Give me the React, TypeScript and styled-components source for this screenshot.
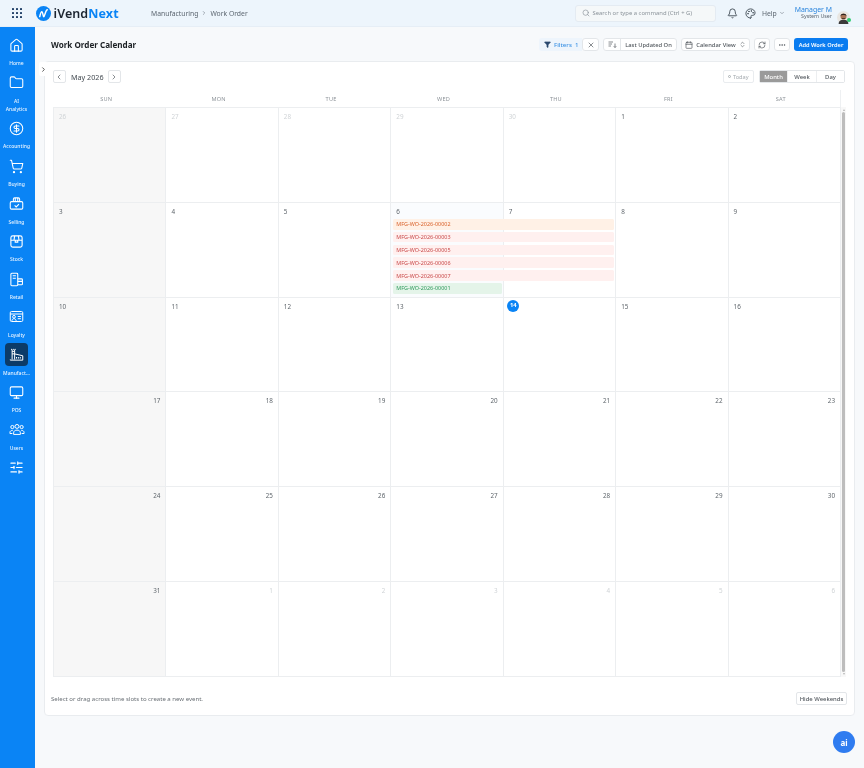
import React from "react";
import styled, { createGlobalStyle } from "styled-components";
import {
  Home,
  Folder,
  CircleDollarSign,
  ShoppingCart,
  Monitor,
  SlidersHorizontal,
  Search,
  Bell,
  Palette,
  ChevronDown,
  ChevronLeft,
  ChevronRight,
  ChevronsUpDown,
  X,
  Calendar,
  RefreshCw,
  Ellipsis,
  Filter,
} from "lucide-react";

const GlobalStyle = createGlobalStyle`
  html, body {
    margin: 0;
    padding: 0;
    height: 100%;
    overflow: hidden;
    background: #f7f9fb;
    font-family: "Noto Sans", "Liberation Sans", sans-serif;
    color: #383838;
  }
  * { box-sizing: border-box; }
`;

const Page = styled.div`
  width: 864px;
  height: 768px;
  display: flex;
  flex-direction: column;
  position: relative;
  will-change: transform;
`;

const TopBar = styled.header`
  height: 27px;
  flex: none;
  display: flex;
  align-items: center;
  background: #edf5fc;
  border-bottom: 1px solid #e6eef6;
  padding-left: 12px;
`;

const AppsGrid = styled.div`
  width: 10px;
  height: 10px;
  display: grid;
  grid-template-columns: repeat(3, 2.4px);
  grid-auto-rows: 2.4px;
  justify-content: space-between;
  align-content: space-between;
  span {
    background: #16365f;
    border-radius: 0.4px;
  }
`;

const Brand = styled.div`
  display: flex;
  align-items: center;
  gap: 2.5px;
  margin-left: 14px;
  width: 115px;
`;

const BrandName = styled.span`
  font-size: 12.5px;
  font-weight: 600;
  color: #1c2530;
  letter-spacing: 0.1px;
  b {
    font-weight: 700;
    color: #0a84f5;
  }
`;

const Crumbs = styled.nav`
  display: flex;
  align-items: center;
  gap: 3px;
  font-size: 6.8px;
  color: #5c6670;
`;

const TopRight = styled.div`
  margin-left: auto;
  display: flex;
  align-items: center;
  padding-right: 14px;
`;

const SearchBox = styled.div`
  width: 141px;
  height: 17px;
  display: flex;
  align-items: center;
  gap: 2px;
  padding-left: 6px;
  background: #f5f8f9;
  border: 1px solid #e4ebf2;
  border-radius: 3px;
  font-size: 5.9px;
  color: #8c949b;
  margin-right: 7px;
`;

const IconSlot = styled.div`
  width: 18px;
  display: flex;
  justify-content: center;
  color: #404a54;
`;

const Help = styled.div`
  display: flex;
  align-items: center;
  gap: 2px;
  font-size: 6.8px;
  color: #5c6670;
  margin: 0 10px 0 2.5px;
`;

const UserBlock = styled.div`
  display: flex;
  flex-direction: column;
  align-items: flex-end;
  line-height: 7.5px;
  margin-right: 5px;
`;

const UserName = styled.span`
  font-size: 6.9px;
  color: #2d86dd;
`;

const UserRole = styled.span`
  font-size: 5.3px;
  color: #5c6670;
`;

const Avatar = styled.div`
  position: relative;
  width: 13px;
  height: 13px;
  &::after {
    content: "";
    position: absolute;
    right: -1px;
    bottom: -2px;
    width: 4px;
    height: 4px;
    border-radius: 50%;
    background: #2ecc71;
  }
`;

const Body = styled.div`
  flex: 1;
  display: flex;
  min-height: 0;
`;

const Sidebar = styled.aside`
  width: 35px;
  flex: none;
  background: #0a84f5;
  padding: 10px 2px 0 0;
  display: flex;
  flex-direction: column;
  align-items: center;
  gap: 7.7px;
`;

const NavItem = styled.div`
  width: 33px;
  display: flex;
  flex-direction: column;
  align-items: center;
`;

const NavIcon = styled.div<{ $active?: boolean }>`
  width: 23px;
  height: 23px;
  margin: -3.5px 0;
  display: flex;
  align-items: center;
  justify-content: center;
  border-radius: 4px;
  color: #fff;
  background: ${(p) => (p.$active ? "#0c3b68" : "transparent")};
`;

const NavLabel = styled.span`
  margin-top: 6px;
  font-size: 5px;
  line-height: 8px;
  color: #e8f3ff;
  font-weight: 500;
  text-align: center;
  white-space: nowrap;
`;

const Main = styled.main`
  flex: 1;
  min-width: 0;
  display: flex;
  flex-direction: column;
  padding-top: 11px;
`;

const TitleRow = styled.div`
  display: flex;
  align-items: center;
  height: 13px;
  padding: 0 16px;
  margin-bottom: 10px;
`;

const Title = styled.h1`
  margin: 0 auto 0 0;
  font-size: 8.1px;
  font-weight: 700;
  color: #1c2024;
`;

const ActionGroup = styled.div`
  display: flex;
  align-items: center;
  gap: 4px;
`;

const FilterPill = styled.div`
  width: 43px;
  height: 13px;
  display: flex;
  align-items: center;
  gap: 3px;
  padding-left: 5px;
  background: #eef5fc;
  border-radius: 3px 0 0 3px;
  font-size: 6.1px;
  font-weight: 500;
  color: #3d93e5;
  white-space: nowrap;
  margin-right: -4px;
`;

const ToolButton = styled.button<{ $w: number }>`
  width: ${(p) => p.$w}px;
  height: 13px;
  padding: 0;
  display: flex;
  align-items: center;
  justify-content: center;
  gap: 3px;
  background: #fff;
  border: 1px solid #e3e6e9;
  border-radius: 3px;
  font: inherit;
  font-size: 5.8px;
  font-weight: 500;
  color: #50565c;
  white-space: nowrap;
`;

const SortGroup = styled.div`
  display: flex;
  width: 74px;
  height: 13px;
  background: #fff;
  border: 1px solid #e3e6e9;
  border-radius: 3px;
  font-size: 5.8px;
  font-weight: 500;
  color: #50565c;
  white-space: nowrap;
`;

const SortIcon = styled.div`
  width: 17px;
  flex: none;
  display: flex;
  align-items: center;
  justify-content: center;
  border-right: 1px solid #e3e6e9;
`;

const SortLabel = styled.div`
  flex: 1;
  display: flex;
  align-items: center;
  justify-content: center;
`;

const PrimaryButton = styled.button`
  width: 54px;
  height: 13px;
  padding: 0;
  border: 0;
  border-radius: 3px;
  background: #0a7cf0;
  color: #fff;
  font: inherit;
  font-size: 5.7px;
  font-weight: 600;
  white-space: nowrap;
`;

const Card = styled.section`
  position: relative;
  height: 655px;
  margin: 0 9px;
  padding: 8px 8px 10px;
  background: #fff;
  border: 1px solid #e9ecef;
  border-radius: 4px;
  display: flex;
  flex-direction: column;
`;

const CollapseTab = styled.div`
  position: absolute;
  left: -6px;
  top: 0;
  width: 9px;
  height: 14px;
  display: flex;
  align-items: center;
  justify-content: center;
  background: #fff;
  border-radius: 2px;
  color: #444;
`;

const CalToolbar = styled.div`
  display: flex;
  align-items: center;
  height: 13px;
  padding-right: 1px;
`;

const NavSquare = styled.button`
  width: 12.5px;
  height: 13px;
  padding: 0;
  display: flex;
  align-items: center;
  justify-content: center;
  background: #fff;
  border: 1px solid #e3e6e9;
  border-radius: 2px;
  color: #50565c;
`;

const MonthLabel = styled.span`
  margin: 0 4.5px 0 5.5px;
  font-size: 7.2px;
  color: #444b52;
`;

const TodayButton = styled.div`
  margin-left: auto;
  width: 31px;
  height: 13px;
  display: flex;
  align-items: center;
  justify-content: center;
  gap: 1.5px;
  border: 1px solid #e9ecef;
  border-radius: 2px;
  font-size: 5.6px;
  color: #a5abb0;
`;

const TodayDot = styled.span`
  width: 3px;
  height: 3px;
  border: 0.7px solid #aab0b5;
  border-radius: 50%;
`;

const Segments = styled.div`
  display: flex;
  margin-left: 5px;
  height: 13px;
  border: 1px solid #e3e6e9;
  border-radius: 2px;
`;

const Segment = styled.div<{ $w: number; $on?: boolean }>`
  width: ${(p) => p.$w}px;
  display: flex;
  align-items: center;
  justify-content: center;
  font-size: 5.9px;
  font-weight: 500;
  color: ${(p) => (p.$on ? "#fff" : "#50565c")};
  background: ${(p) => (p.$on ? "#9a9a9a" : "#fff")};
  border-left: ${(p) => (p.$on ? "0" : "1px solid #eceef0")};
`;

const CalendarBody = styled.div`
  margin-top: 7px;
  height: 587px;
  display: flex;
  flex-direction: column;
`;

const WeekHead = styled.div`
  height: 17px;
  width: 791px;
  margin-left: -3px;
  padding-right: 3px;
  flex: none;
  display: grid;
  grid-template-columns: repeat(7, 1fr);
  border-right: 1px solid #eef0f2;
`;

const DayName = styled.div`
  display: flex;
  align-items: center;
  justify-content: center;
  font-size: 5.6px;
  letter-spacing: 0.2px;
  color: #8d9399;
`;

const GridWrap = styled.div`
  flex: 1;
  display: flex;
  min-height: 0;
`;

const Weeks = styled.div`
  width: 788px;
  display: flex;
  flex-direction: column;
  border-top: 1px solid #eceef0;
  border-left: 1px solid #eceef0;
`;

const Week = styled.div`
  flex: 1;
  min-height: 0;
  display: grid;
  grid-template-columns: repeat(7, 1fr);
  grid-template-rows: 16px repeat(6, 12.85px) 1fr;
  border-bottom: 1px solid #eceef0;
`;

const Cell = styled.div<{ $col: number; $grey?: boolean; $tint?: boolean; $right?: boolean }>`
  grid-column: ${(p) => p.$col};
  grid-row: 1 / -1;
  padding: 4px 5px 0;
  font-size: 6.3px;
  line-height: 9px;
  text-align: ${(p) => (p.$right ? "right" : "left")};
  border-right: 1px solid #eceef0;
  background: ${(p) => (p.$grey ? "#f7f7f7" : p.$tint ? "#fafcfe" : "#fff")};
`;

const DateNum = styled.span<{ $faded?: boolean; $today?: boolean }>`
  color: ${(p) => (p.$today ? "#fff" : p.$faded ? "#cfd3d6" : "#5f666c")};
  ${(p) =>
    p.$today
      ? `
    display: inline-flex;
    vertical-align: top;
    align-items: center;
    justify-content: center;
    width: 12px;
    height: 12px;
    margin: -2px 0 0 -1.5px;
    border-radius: 50%;
    background: #0a84f5;
    font-weight: 700;
    font-size: 5.8px;
  `
      : ""}
`;

const tones = {
  orange: { bg: "#fff1e6", fg: "#d9622b" },
  red: { bg: "#fff0ef", fg: "#c94a4a" },
  green: { bg: "#e4f4e9", fg: "#2f9a5c" },
};

const EventBar = styled.div<{ $tone: keyof typeof tones; $row: number; $span: number }>`
  grid-column: 4 / span ${(p) => p.$span};
  grid-row: ${(p) => p.$row};
  z-index: 1;
  height: 10.7px;
  margin: 0 2px 0 1.5px;
  padding-left: 3.5px;
  display: flex;
  align-items: center;
  border-radius: 1.5px;
  font-size: 5.45px;
  background: ${(p) => tones[p.$tone].bg};
  color: ${(p) => tones[p.$tone].fg};
`;

const ScrollTrack = styled.div`
  width: 5px;
  display: flex;
  flex-direction: column;
  align-items: center;
  padding: 2px 0;
  gap: 1px;
  background: #f8f8f8;
`;

const ScrollArrow = styled.div<{ $down?: boolean }>`
  width: 0;
  height: 0;
  border-left: 1.5px solid transparent;
  border-right: 1.5px solid transparent;
  ${(p) => (p.$down ? "border-top: 2px solid #b5b5b5;" : "border-bottom: 2px solid #b5b5b5;")}
`;

const ScrollThumb = styled.div`
  flex: 1;
  width: 3px;
  border-radius: 2px;
  background: #bdbdbd;
`;

const CardFooter = styled.div`
  margin-top: auto;
  margin: auto -1px 0 -2px;
  display: flex;
  align-items: center;
  justify-content: space-between;
  font-size: 6.05px;
  color: #6a7076;
`;

const GhostButton = styled.button`
  width: 51px;
  height: 13px;
  padding: 0;
  background: #fff;
  border: 1px solid #e3e6e9;
  border-radius: 2px;
  font: inherit;
  font-size: 5.9px;
  font-weight: 500;
  color: #50565c;
  white-space: nowrap;
`;

const AiFab = styled.div`
  position: absolute;
  right: 9px;
  bottom: 15px;
  width: 22px;
  height: 22px;
  display: flex;
  align-items: center;
  justify-content: center;
  border-radius: 50%;
  background: #2f7cf0;
  color: #fff;
  font-size: 8px;
  font-weight: 700;
`;

const s = { strokeWidth: 1.7, size: 15 };

const SellingIcon = () => (
  <svg width="15" height="15" viewBox="0 0 24 24" fill="none" stroke="currentColor" strokeWidth="1.7">
    <rect x="2" y="9" width="20" height="12" rx="2" />
    <path d="M7 9V5a2 2 0 0 1 2-2h6a2 2 0 0 1 2 2v4M10 3v6M14 3v6" />
    <path d="M9 15l2.5 2.5L16 13" />
  </svg>
);

const StockIcon = () => (
  <svg width="15" height="15" viewBox="0 0 24 24" fill="none" stroke="currentColor" strokeWidth="1.8">
    <rect x="3" y="3" width="18" height="18" rx="3" />
    <path d="M3 10h18M10 10v3h4v-3M9 3l-1 7M15 3l1 7" />
  </svg>
);

const RetailIcon = () => (
  <svg width="15" height="15" viewBox="0 0 24 24" fill="none" stroke="currentColor" strokeWidth="1.7">
    <rect x="3" y="2" width="11" height="20" rx="1.5" />
    <path d="M6 6h5M6 10h5M14 11h6a1.5 1.5 0 0 1 1.5 1.5V19a1.5 1.5 0 0 1-1.5 1.5h-6M14 15h7.5" />
  </svg>
);

const LoyaltyIcon = () => (
  <svg width="15" height="15" viewBox="0 0 24 24" fill="none" stroke="currentColor" strokeWidth="1.6">
    <rect x="2" y="4" width="20" height="16" rx="2" />
    <path d="M2 8h20" />
    <circle cx="8" cy="12.5" r="2.2" />
    <path d="M4.5 19c.5-2.5 2-3.5 3.5-3.5s3 1 3.5 3.5M14 12h5M14 15.5h5" />
  </svg>
);

const FactoryIcon = () => (
  <svg width="15" height="15" viewBox="0 0 24 24" fill="none" stroke="currentColor" strokeWidth="1.6">
    <path d="M5 20V4M9 20V4M5 7h4M5 11h4M4 3v1.5M7 3v1.5M10 3v1.5" />
    <path d="M9 11l13 3v7H2v-1" />
    <path d="M12 16v2.5M15 16v2.5M18 16v2.5" />
  </svg>
);

const GroupIcon = () => (
  <svg width="16" height="15" viewBox="0 0 26 24" fill="none" stroke="currentColor" strokeWidth="1.6">
    <circle cx="13" cy="7" r="3.2" />
    <circle cx="5.5" cy="8" r="2.6" />
    <circle cx="20.5" cy="8" r="2.6" />
    <path d="M7.5 20v-2.5c0-3 2.5-4.5 5.5-4.5s5.5 1.500 5.500 4.500V20z" />
    <path d="M6 13.5c-2.5 0-4.5 1-4.5 3.5v1.5h4M20 13.5c2.5 0 4.500 1 4.500 3.500v1.500h-4" />
  </svg>
);

const SortLinesIcon = () => (
  <svg width="9" height="8" viewBox="0 0 18 16" fill="none" stroke="currentColor" strokeWidth="1.4">
    <path d="M1 2h9M1 6h7M1 10h5M14 5v8M11.5 10.5L14 13l2.5-2.5" />
  </svg>
);

const LogoMark = () => (
  <svg width="15" height="15" viewBox="0 0 24 24">
    <circle cx="12" cy="12" r="12" fill="#0a84f5" />
    <path
      d="M6 17c1-5 2-8 3.5-8S11 17 12.5 17 15 7 18 6"
      fill="none"
      stroke="#fff"
      strokeWidth="2.4"
      strokeLinecap="round"
    />
  </svg>
);

const Portrait = () => (
  <svg width="13" height="13" viewBox="0 0 24 24">
    <circle cx="12" cy="12" r="12" fill="#e8e6e2" />
    <path d="M3 24c0-6 4-8 9-8s9 2 9 8z" fill="#3b3a3a" />
    <circle cx="12" cy="10" r="5.5" fill="#a87355" />
    <path d="M6.5 9c0-5 11-5 11 0-2-2-9-2-11 0z" fill="#2a2320" />
    <path d="M9 13h6v1.5H9z" fill="#3a2a22" />
  </svg>
);

const navItems: { label: string; icon: React.ReactNode; active?: boolean }[] = [
  { label: "Home", icon: <Home {...s} /> },
  { label: "AI\nAnalytics", icon: <Folder {...s} /> },
  { label: "Accounting", icon: <CircleDollarSign {...s} /> },
  { label: "Buying", icon: <ShoppingCart {...s} /> },
  { label: "Selling", icon: <SellingIcon /> },
  { label: "Stock", icon: <StockIcon /> },
  { label: "Retail", icon: <RetailIcon /> },
  { label: "Loyalty", icon: <LoyaltyIcon /> },
  { label: "Manufact...", icon: <FactoryIcon />, active: true },
  { label: "POS", icon: <Monitor {...s} /> },
  { label: "Users", icon: <GroupIcon /> },
  { label: "", icon: <SlidersHorizontal {...s} /> },
];

const dayNames = ["SUN", "MON", "TUE", "WED", "THU", "FRI", "SAT"];

const weeks: { n: number; faded?: boolean }[][] = [
  [26, 27, 28, 29, 30].map((n) => ({ n, faded: true })).concat([1, 2].map((n) => ({ n, faded: false }))),
  [3, 4, 5, 6, 7, 8, 9].map((n) => ({ n })),
  [10, 11, 12, 13, 14, 15, 16].map((n) => ({ n })),
  [17, 18, 19, 20, 21, 22, 23].map((n) => ({ n })),
  [24, 25, 26, 27, 28, 29, 30].map((n) => ({ n })),
  [{ n: 31 }, ...[1, 2, 3, 4, 5, 6].map((n) => ({ n, faded: true }))],
];

const events: { id: string; tone: keyof typeof tones; span: number }[] = [
  { id: "MFG-WO-2026-00002", tone: "orange", span: 2 },
  { id: "MFG-WO-2026-00003", tone: "red", span: 2 },
  { id: "MFG-WO-2026-00005", tone: "red", span: 2 },
  { id: "MFG-WO-2026-00006", tone: "red", span: 2 },
  { id: "MFG-WO-2026-00007", tone: "red", span: 2 },
  { id: "MFG-WO-2026-00001", tone: "green", span: 1 },
];

export default function App() {
  return (
    <Page>
      <GlobalStyle />
      <TopBar>
        <AppsGrid>
          {Array.from({ length: 9 }).map((_, i) => (
            <span key={i} />
          ))}
        </AppsGrid>
        <Brand>
          <LogoMark />
          <BrandName>
            iVend<b>Next</b>
          </BrandName>
        </Brand>
        <Crumbs>
          <span>Manufacturing</span>
          <ChevronRight size={6} />
          <span>Work Order</span>
        </Crumbs>
        <TopRight>
          <SearchBox>
            <Search size={8} />
            Search or type a command (Ctrl + G)
          </SearchBox>
          <IconSlot>
            <Bell size={11} />
          </IconSlot>
          <IconSlot>
            <Palette size={11} />
          </IconSlot>
          <Help>
            Help <ChevronDown size={6} />
          </Help>
          <UserBlock>
            <UserName>Manager M</UserName>
            <UserRole>System User</UserRole>
          </UserBlock>
          <Avatar>
            <Portrait />
          </Avatar>
        </TopRight>
      </TopBar>
      <Body>
        <Sidebar>
          {navItems.map((item) => (
            <NavItem key={item.label || "settings"}>
              <NavIcon $active={item.active}>{item.icon}</NavIcon>
              {item.label && (
                <NavLabel>
                  {item.label.split("\n").map((l) => (
                    <div key={l}>{l}</div>
                  ))}
                </NavLabel>
              )}
            </NavItem>
          ))}
        </Sidebar>
        <Main>
          <TitleRow>
            <Title>Work Order Calendar</Title>
            <ActionGroup>
              <FilterPill>
                <Filter size={7} fill="#2b4a6f" stroke="#2b4a6f" />
                Filters&nbsp;&nbsp;1
              </FilterPill>
              <ToolButton $w={17}>
                <X size={8} />
              </ToolButton>
              <SortGroup>
                <SortIcon>
                  <SortLinesIcon />
                </SortIcon>
                <SortLabel>Last Updated On</SortLabel>
              </SortGroup>
              <ToolButton $w={69}>
                <Calendar size={8} />
                Calendar View
                <ChevronsUpDown size={7} />
              </ToolButton>
              <ToolButton $w={16}>
                <RefreshCw size={8} />
              </ToolButton>
              <ToolButton $w={16}>
                <Ellipsis size={8} />
              </ToolButton>
              <PrimaryButton>Add Work Order</PrimaryButton>
            </ActionGroup>
          </TitleRow>
          <Card>
            <CollapseTab>
              <ChevronRight size={7} strokeWidth={3} />
            </CollapseTab>
            <CalToolbar>
              <NavSquare>
                <ChevronLeft size={8} />
              </NavSquare>
              <MonthLabel>May 2026</MonthLabel>
              <NavSquare>
                <ChevronRight size={8} />
              </NavSquare>
              <TodayButton>
                <TodayDot /> Today
              </TodayButton>
              <Segments>
                <Segment $w={27} $on>
                  Month
                </Segment>
                <Segment $w={29}>Week</Segment>
                <Segment $w={28}>Day</Segment>
              </Segments>
            </CalToolbar>
            <CalendarBody>
              <WeekHead>
                {dayNames.map((d) => (
                  <DayName key={d}>{d}</DayName>
                ))}
              </WeekHead>
              <GridWrap>
                <Weeks>
                  {weeks.map((week, w) => (
                    <Week key={w}>
                      {week.map((d, i) => (
                        <Cell
                          key={i}
                          $col={i + 1}
                          $grey={i === 0}
                          $tint={w === 1 && i === 3}
                          $right={w >= 3}
                        >
                          <DateNum $faded={d.faded} $today={w === 2 && d.n === 14}>
                            {d.n}
                          </DateNum>
                        </Cell>
                      ))}
                      {w === 1 &&
                        events.map((e, i) => (
                          <EventBar key={e.id} $tone={e.tone} $span={e.span} $row={i + 2}>
                            {e.id}
                          </EventBar>
                        ))}
                    </Week>
                  ))}
                </Weeks>
                <ScrollTrack>
                  <ScrollArrow />
                  <ScrollThumb />
                  <ScrollArrow $down />
                </ScrollTrack>
              </GridWrap>
            </CalendarBody>
            <CardFooter>
              <span>Select or drag across time slots to create a new event.</span>
              <GhostButton>Hide Weekends</GhostButton>
            </CardFooter>
          </Card>
        </Main>
      </Body>
      <AiFab>ai</AiFab>
    </Page>
  );
}
